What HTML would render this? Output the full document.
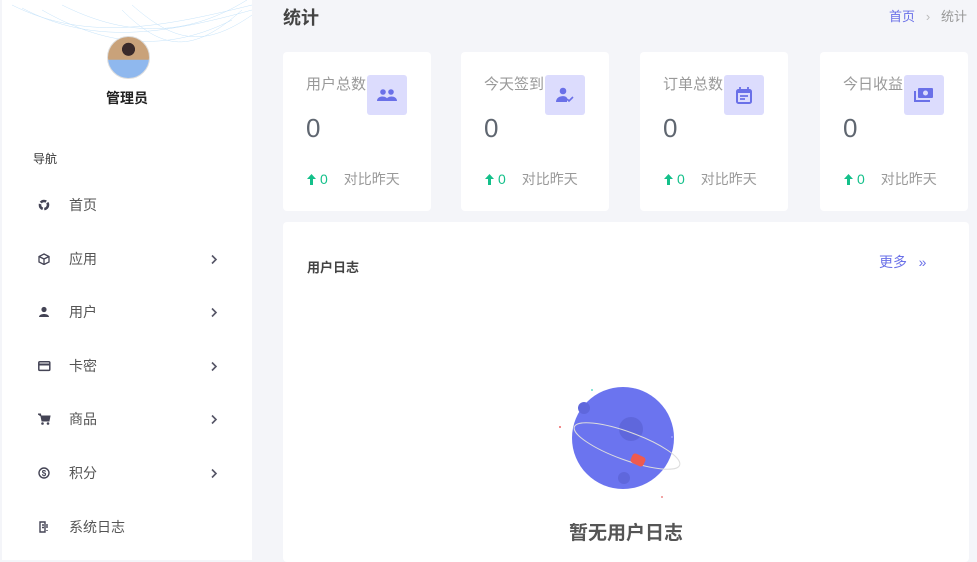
<!DOCTYPE html>
<html><head><meta charset="utf-8"><style>
*{margin:0;padding:0;box-sizing:border-box}
body{width:977px;height:553px;overflow:hidden;background:#f4f5f9;font-family:"Liberation Sans","Noto Sans CJK SC",sans-serif;position:relative}
.side{position:absolute;left:2px;top:0;width:250px;height:560px;background:#fff;overflow:hidden}
.av{position:absolute;left:105px;top:36px;width:43px;height:43px;border-radius:50%;background:radial-gradient(circle at 50% 30%,#3a2a2a 0 18%,transparent 19%),linear-gradient(#c9a27a 0 55%,#8fb8ee 56%);border:1px solid #ddd}
.name{position:absolute;left:0;width:250px;top:88px;text-align:center;font-size:14px;font-weight:bold;color:#222}
.nav{position:absolute;left:31px;top:150px;font-size:12px;color:#333}
.it{position:absolute;left:36px;font-size:14px;color:#555;height:20px;line-height:20px;width:190px}
.it svg{position:absolute;left:0;top:4px}
.it span{position:absolute;left:31px;white-space:nowrap}
.it svg.ch{left:172px;top:5px}
.title{position:absolute;left:283px;top:4px;font-size:18px;font-weight:bold;color:#444}
.bc{position:absolute;right:10px;top:6px;font-size:13px;color:#999}
.bc b{font-weight:normal;color:#6a70e8}
.card{position:absolute;top:52px;width:148px;height:159px;background:#fff;border-radius:4px}
.card .l{position:absolute;left:23px;top:21px;font-size:15px;color:#999;letter-spacing:0}
.card .ic{position:absolute;left:84px;top:23px;width:40px;height:40px;background:#dcdcfd;border-radius:3px;display:flex;align-items:center;justify-content:center}
.card .n{position:absolute;left:23px;top:61px;font-size:26px;color:#5f6670}
.card .f{position:absolute;left:24px;top:117px;font-size:14px;color:#999}
.card .f i{font-style:normal;color:#14c08a;margin-right:16px}
.card .f svg{vertical-align:-1px;margin-right:4px}
.big{position:absolute;left:283px;top:222px;width:686px;height:340px;background:#fff;border-radius:4px}
</style></head><body>
<div class="side">
<svg width="250" height="60" style="position:absolute;left:0;top:0"><g fill="none" stroke="#9fd0f6" stroke-width=".5" opacity=".6"><path d="M10 5 C80 40 150 30 250 5"/><path d="M20 8 C90 45 160 35 250 10"/><path d="M40 10 C110 50 170 50 230 20"/><path d="M120 10 C160 50 190 55 240 10"/><path d="M130 5 C170 40 200 50 250 15"/><path d="M60 5 C120 35 180 40 245 0"/></g></svg>
<div class="av"></div>
<div class="name">管理员</div>
<div class="nav">导航</div>
<div class="it" style="top:195px"><svg width="12" height="12"><circle cx="6" cy="6" r="4" fill="none" stroke="#445" stroke-width="2.6" stroke-dasharray="6 1.5"/></svg><span>首页</span></div>
<div class="it" style="top:249px"><svg width="12" height="12"><path d="M6 1L11 3.5V9L6 11.5L1 9V3.5Z M1 3.5L6 6L11 3.5M6 6V11.5" fill="none" stroke="#445" stroke-width="1.3"/></svg><span>应用</span><svg class="ch" width="8" height="11"><path d="M2 1.5L6 5.5L2 9.5" fill="none" stroke="#556" stroke-width="1.6"/></svg></div>
<div class="it" style="top:302px"><svg width="12" height="12"><circle cx="6" cy="3.5" r="2.6" fill="#445"/><path d="M1 11C1 7 11 7 11 11Z" fill="#445"/></svg><span>用户</span><svg class="ch" width="8" height="11"><path d="M2 1.5L6 5.5L2 9.5" fill="none" stroke="#556" stroke-width="1.6"/></svg></div>
<div class="it" style="top:356px"><svg width="13" height="12"><rect x="0.8" y="1.8" width="11" height="8.6" rx="1" fill="none" stroke="#445" stroke-width="1.5"/><rect x="1" y="3.5" width="10.6" height="2" fill="#445"/></svg><span>卡密</span><svg class="ch" width="8" height="11"><path d="M2 1.5L6 5.5L2 9.5" fill="none" stroke="#556" stroke-width="1.6"/></svg></div>
<div class="it" style="top:409px"><svg width="13" height="12"><path d="M0 1H2.5L4 8H11L12 3H3Z" fill="#445" stroke="#445"/><circle cx="4.5" cy="10.5" r="1.3" fill="#445"/><circle cx="10" cy="10.5" r="1.3" fill="#445"/></svg><span>商品</span><svg class="ch" width="8" height="11"><path d="M2 1.5L6 5.5L2 9.5" fill="none" stroke="#556" stroke-width="1.6"/></svg></div>
<div class="it" style="top:463px"><svg width="12" height="12"><circle cx="6" cy="6" r="5" fill="none" stroke="#445" stroke-width="1.4"/><text x="6" y="9" font-size="8" font-weight="bold" text-anchor="middle" fill="#445" font-family="Liberation Sans">$</text></svg><span>积分</span><svg class="ch" width="8" height="11"><path d="M2 1.5L6 5.5L2 9.5" fill="none" stroke="#556" stroke-width="1.6"/></svg></div>
<div class="it" style="top:517px"><svg width="12" height="12"><path d="M2 1H7V11H2Z M4 4H6M4 6.5H6" fill="none" stroke="#445" stroke-width="1.4"/><path d="M9 3V7M9 9V10" stroke="#445" stroke-width="1.4"/></svg><span>系统日志</span></div>
</div>
<div class="title">统计</div>
<div class="bc"><b>首页</b>&nbsp;&nbsp;&nbsp;<span style="color:#bbb">›</span>&nbsp;&nbsp;&nbsp;统计</div>

<div class="card" style="left:283px"><div class="l">用户总数</div><div class="ic"><svg width="20" height="14"><circle cx="6" cy="4" r="2.8" fill="#6a70e8"/><circle cx="14" cy="4" r="2.8" fill="#6a70e8"/><path d="M0 13C0 7 11 7 11 13ZM9 13C9 7 20 7 20 13Z" fill="#6a70e8"/></svg></div><div class="n">0</div><div class="f"><i><svg width="9" height="11"><path d="M4.5 0L9 5H6V11H3V5H0Z" fill="#14c08a"/></svg>0</i>对比昨天</div></div>
<div class="card" style="left:461px"><div class="l">今天签到</div><div class="ic"><svg width="18" height="16"><circle cx="7" cy="4" r="3.3" fill="#6a70e8"/><path d="M0 15C0 8 10 8 11 11V15Z" fill="#6a70e8"/><path d="M11 12L13 14L17 10" fill="none" stroke="#6a70e8" stroke-width="1.6"/></svg></div><div class="n">0</div><div class="f"><i><svg width="9" height="11"><path d="M4.5 0L9 5H6V11H3V5H0Z" fill="#14c08a"/></svg>0</i>对比昨天</div></div>
<div class="card" style="left:640px"><div class="l">订单总数</div><div class="ic"><svg width="16" height="17"><rect x="1" y="3" width="14" height="13" rx="1.5" fill="none" stroke="#6a70e8" stroke-width="2"/><rect x="1" y="3" width="14" height="3" fill="#6a70e8"/><path d="M4 0V3M12 0V3M4 9H12M4 12H9" stroke="#6a70e8" stroke-width="1.8"/></svg></div><div class="n">0</div><div class="f"><i><svg width="9" height="11"><path d="M4.5 0L9 5H6V11H3V5H0Z" fill="#14c08a"/></svg>0</i>对比昨天</div></div>
<div class="card" style="left:820px"><div class="l">今日收益</div><div class="ic"><svg width="20" height="16"><rect x="4" y="1" width="15" height="10" rx="1" fill="#6a70e8"/><circle cx="11.5" cy="6" r="2.5" fill="#dcdcfd"/><path d="M1 4V14H16" fill="none" stroke="#6a70e8" stroke-width="2"/></svg></div><div class="n">0</div><div class="f"><i><svg width="9" height="11"><path d="M4.5 0L9 5H6V11H3V5H0Z" fill="#14c08a"/></svg>0</i>对比昨天</div></div>

<div class="big">
<div style="position:absolute;left:24px;top:35px;font-size:13px;font-weight:bold;color:#444">用户日志</div>
<div style="position:absolute;left:596px;top:30px;font-size:14px;color:#6a70e8">更多&nbsp;&nbsp;&nbsp;»</div>
<svg width="140" height="130" style="position:absolute;left:274px;top:150px" viewBox="0 0 140 130">
<circle cx="66" cy="66" r="51" fill="#6b74ef"/>
<circle cx="27" cy="36" r="6" fill="#5f67dc"/><circle cx="74" cy="57" r="12" fill="#5f67dc"/><circle cx="67" cy="106" r="6" fill="#5f67dc"/>
<ellipse cx="70" cy="74" rx="56" ry="14" transform="rotate(20 70 74)" fill="none" stroke="#ddd" stroke-width="1"/>
<rect x="74" y="83" width="14" height="10" rx="3" fill="#ef5a4f" transform="rotate(25 81 88)"/>
<circle cx="3" cy="55" r="1" fill="#e66"/><circle cx="115" cy="65" r="1" fill="#99f"/><circle cx="35" cy="18" r="1" fill="#6dc"/><circle cx="105" cy="125" r="1" fill="#e88"/>
</svg>
<div style="position:absolute;left:0;width:686px;top:296px;text-align:center;font-size:19px;font-weight:bold;color:#555">暂无用户日志</div>
</div>
</body></html>
